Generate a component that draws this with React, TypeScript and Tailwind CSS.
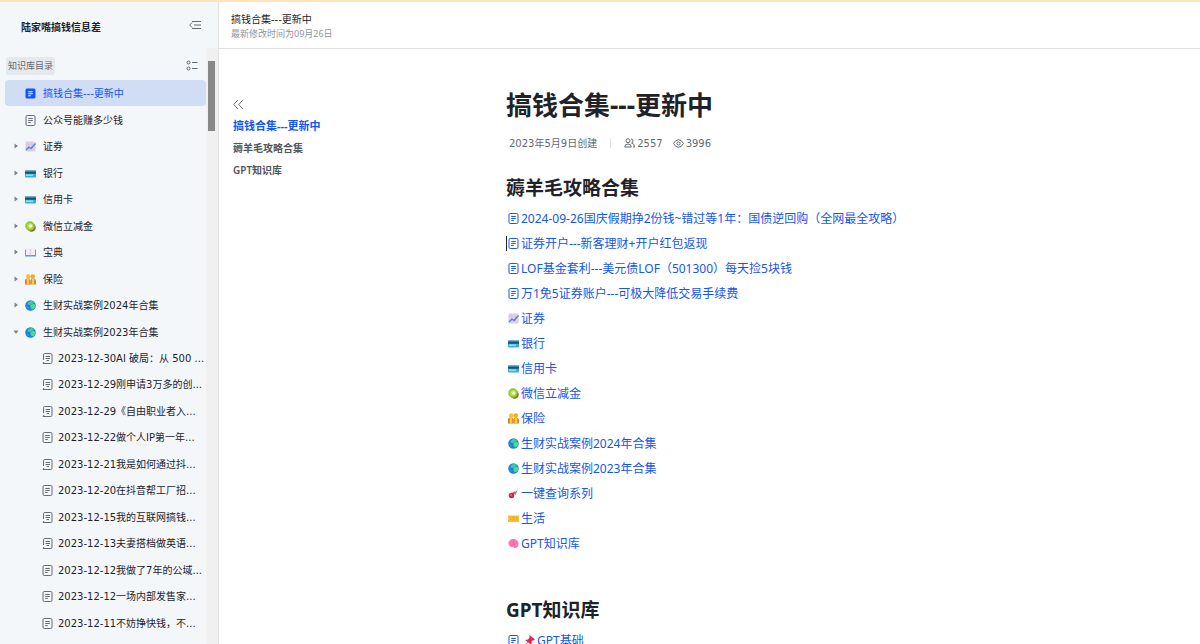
import type { ReactNode } from 'react'

type IconName =
  | 'doc'
  | 'docSolid'
  | 'thread'
  | 'chart'
  | 'card'
  | 'kiwi'
  | 'book'
  | 'people'
  | 'globe'
  | 'comet'
  | 'ticket'
  | 'brain'
  | 'pin'

const drawings: Record<IconName, ReactNode> = {
  doc: (
    <g fill="none" stroke="currentColor" strokeWidth="2">
      <rect x="2" y="1" width="18" height="20" rx="2.5" />
      <path d="M6.5 7h9M6.5 11h9M6.5 15h5" />
    </g>
  ),
  docSolid: (
    <>
      <rect x="1" y="1" width="20" height="20" rx="3" fill="currentColor" />
      <path d="M6.5 7.5h9M6.5 11.5h9M6.5 15.5h5" stroke="#fff" strokeWidth="2" />
    </>
  ),
  thread: (
    <g fill="none" stroke="currentColor" strokeWidth="2">
      <path d="M3 14V3.500A2.500 2.500 0 0 1 5.500 1H17.500A2.500 2.500 0 0 1 20 3.500v15a2.500 2.500 0 0 1-2.500 2.500H2l2-3" />
      <path d="M7 7h9M7 11h9M9 15h5" />
    </g>
  ),
  chart: (
    <>
      <rect x="1" y="1" width="20" height="20" rx="1" fill="#dfd0e8" />
      <path d="M1 7h20M1 14h20M7 1v20M14 1v20" stroke="#cdbcdc" />
      <path d="M2 18l6-6 4 3 9-10" fill="none" stroke="#4b85c8" strokeWidth="2.600" />
    </>
  ),
  card: (
    <>
      <rect x="0" y="5" width="22" height="14" rx="1.500" fill="#35b0dc" />
      <rect x="0" y="5" width="22" height="2.500" fill="#3d93bd" />
      <rect x="0" y="7.500" width="22" height="4" fill="#1d4f70" />
      <rect x="2" y="13" width="14" height="2.500" fill="#b9e6f3" />
    </>
  ),
  kiwi: (
    <>
      <circle cx="13" cy="13" r="8.500" fill="#936538" />
      <circle cx="10" cy="10" r="9.500" fill="#8ac926" />
      <circle cx="10" cy="10" r="6.500" fill="#a9db45" />
      <ellipse cx="11" cy="10" rx="4" ry="3.500" fill="#f3f8d6" />
    </>
  ),
  book: (
    <>
      <path d="M0 5h22v14H0z" fill="#5b9be8" />
      <path d="M2 3h8l1 1 1-1h8v13h-8l-1 1-1-1H2z" fill="#f1ecf6" />
      <path d="M11 4v13" stroke="#b8a6c9" />
    </>
  ),
  people: (
    <>
      <circle cx="6.500" cy="5" r="4.500" fill="#ffb92e" />
      <circle cx="15.500" cy="5" r="4.500" fill="#f5a623" />
      <path d="M0 21v-8q0-4 5-4t6 4v8z" fill="#e8742c" />
      <path d="M11 21v-8q0-4 5-4t6 4v8z" fill="#c48a2a" />
      <path d="M6 10v10M16 10v10" stroke="#ffc94a" strokeWidth="5" />
    </>
  ),
  globe: (
    <>
      <circle cx="11" cy="11" r="10.500" fill="#1c80dc" />
      <path d="M6 5q3-4 8-3l4 3-3 2-2 2-4 1-4-1z" fill="#43c9a0" />
      <path d="M11 10l6-3 4 4q0 4-4 7l-3 1-3-4z" fill="#4fdb8c" />
      <path d="M3 12l4 2 1 4-3-1z" fill="#2f9fd0" />
    </>
  ),
  comet: (
    <>
      <path d="M11 11l9-8-5 11z" fill="#8f8ca0" />
      <path d="M6 11l9-5-4 9z" fill="#e74856" />
      <circle cx="7" cy="15" r="5.500" fill="#d8223e" />
      <circle cx="6" cy="14" r="2" fill="#f06a78" />
    </>
  ),
  ticket: (
    <>
      <path d="M0 5h22v5q-2 1.500 0 3v5H0v-5q2-1.500 0-3z" fill="#f9bd32" />
      <path d="M5 9v5M8 9h6M8 14h6M18 8v7" stroke="#d8921e" strokeWidth="1.200" />
    </>
  ),
  brain: (
    <>
      <path d="M1 12C0 6 5 2 11 2c6 0 11 5 10 11 0 4-2 6-5 6l-3 2-2-3c-5 1-9-1-10-6z" fill="#f47bb5" />
      <path d="M5 10q3-3 6 0t7 0M6 14q4-2 8 0M11 4q-1 3 2 4" fill="none" stroke="#de62a2" strokeWidth="1.200" />
    </>
  ),
  pin: (
    <>
      <path d="M8 14l-6 7" stroke="#8d8d99" strokeWidth="2" />
      <path d="M11 0l11 9-3 2-2 0-2 3 0 6L2 10l6-1 3-4z" fill="#e5264c" />
    </>
  ),
}

function Icon({ name, className = '' }: { name: IconName; className?: string }) {
  return (
    <svg
      viewBox="0 0 22 22"
      className={`h-[11px] w-[11px] shrink-0 ${className}`}
      aria-hidden="true"
    >
      {drawings[name]}
    </svg>
  )
}

const articles: { icon: IconName; title: string }[] = [
  { icon: 'thread', title: '2023-12-30AI 破局：从 500 ...' },
  { icon: 'thread', title: '2023-12-29刚申请3万多的创...' },
  { icon: 'thread', title: '2023-12-29《自由职业者入...' },
  { icon: 'doc', title: '2023-12-22做个人IP第一年...' },
  { icon: 'thread', title: '2023-12-21我是如何通过抖...' },
  { icon: 'doc', title: '2023-12-20在抖音帮工厂招...' },
  { icon: 'thread', title: '2023-12-15我的互联网搞钱...' },
  { icon: 'thread', title: '2023-12-13夫妻搭档做英语...' },
  { icon: 'doc', title: '2023-12-12我做了7年的公域...' },
  { icon: 'doc', title: '2023-12-12一场内部发售家...' },
  { icon: 'doc', title: '2023-12-11不妨挣快钱，不...' },
  { icon: 'doc', title: '' },
]

const folders: { icon: IconName; title: string; children?: typeof articles }[] = [
  { icon: 'chart', title: '证券' },
  { icon: 'card', title: '银行' },
  { icon: 'card', title: '信用卡' },
  { icon: 'kiwi', title: '微信立减金' },
  { icon: 'book', title: '宝典' },
  { icon: 'people', title: '保险' },
  { icon: 'globe', title: '生财实战案例2024年合集' },
  { icon: 'globe', title: '生财实战案例2023年合集', children: articles },
]

const links: { icon: IconName; title: string; cursor?: boolean }[] = [
  { icon: 'doc', title: '2024-09-26国庆假期挣2份钱~错过等1年：国债逆回购（全网最全攻略）' },
  { icon: 'doc', title: '证券开户---新客理财+开户红包返现', cursor: true },
  { icon: 'doc', title: 'LOF基金套利---美元债LOF（501300）每天捡5块钱' },
  { icon: 'doc', title: '万1免5证券账户---可极大降低交易手续费' },
  { icon: 'chart', title: '证券' },
  { icon: 'card', title: '银行' },
  { icon: 'card', title: '信用卡' },
  { icon: 'kiwi', title: '微信立减金' },
  { icon: 'people', title: '保险' },
  { icon: 'globe', title: '生财实战案例2024年合集' },
  { icon: 'globe', title: '生财实战案例2023年合集' },
  { icon: 'comet', title: '一键查询系列' },
  { icon: 'ticket', title: '生活' },
  { icon: 'brain', title: 'GPT知识库' },
]

function Sidebar() {
  return (
    <aside className="flex w-[219px] shrink-0 flex-col border-r border-[#dee0e3] bg-[#f4f7fa] font-['DejaVu_Sans','Noto_Sans_CJK_SC',sans-serif]">
      <div className="flex h-[46px] shrink-0 items-center justify-between pt-1 pr-[17px] pl-[21px]">
        <span className="text-[10px] font-bold">陆家嘴搞钱信息差</span>
        <button aria-label="收起侧边栏" className="mb-1 text-[#646a73]">
          <svg viewBox="0 0 12 10" className="h-[10px] w-3" fill="none" stroke="currentColor">
            <path d="M3 1.500h9M5 5h7M3 8.500h9M3 2.500L.7 5 3 7.500" />
          </svg>
        </button>
      </div>

      <div className="flex min-h-0 flex-1">
        <nav className="min-w-0 flex-1 overflow-hidden">
          <div className="mt-2 mb-[5px] flex h-[19px] items-center justify-between pr-2 pl-1.5">
            <span className="rounded-xs bg-[#e6e9ec] px-[2px] text-[9px] leading-[18px] text-[#646a73]">
              知识库目录
            </span>
            <button aria-label="目录选项" className="text-[#646a73]">
              <svg viewBox="0 0 12 11" className="h-[11px] w-3" fill="none" stroke="currentColor">
                <circle cx="2.500" cy="2.500" r="1.500" />
                <circle cx="2.500" cy="8.500" r="1.500" />
                <path d="M6 2.500h5.500M6 8.500h5.500" />
              </svg>
            </button>
          </div>

          <ul>
            <li className="odd:mb-px">
              <a
                href="#top"
                className="ml-[5px] flex h-[26px] items-center gap-[7px] rounded bg-[#d1dcf5] pl-[20px] text-[#1456f0]"
              >
                <Icon name="docSolid" />
                搞钱合集---更新中
              </a>
            </li>
            <li className="odd:mb-px">
              <a href="#second" className="flex h-[26px] items-center gap-[7px] pl-[25px]">
                <Icon name="doc" className="text-[#646a73]" />
                公众号能赚多少钱
              </a>
            </li>
            {folders.map((folder) => (
              <li key={folder.title} className="odd:mb-px">
                <button
                  aria-expanded={!!folder.children}
                  className="flex h-[26px] w-full items-center pl-[13px]"
                >
                  <svg
                    viewBox="0 0 6 6"
                    className={`mr-1.5 h-1.5 w-1.5 fill-[#7d838c] ${folder.children ? 'rotate-90' : ''}`}
                  >
                    <path d="M1.500 .5L5 3 1.500 5.500z" />
                  </svg>
                  <Icon name={folder.icon} />
                  <span className="ml-[7px]">{folder.title}</span>
                </button>
                {folder.children && (
                  <ul>
                    {folder.children.map((article) => (
                      <li key={article.title} className="even:mb-px">
                        <a
                          href="#article"
                          className="flex h-[26px] items-center gap-[5px] pl-[42px] whitespace-nowrap"
                        >
                          <Icon name={article.icon} className="text-[#646a73]" />
                          {article.title}
                        </a>
                      </li>
                    ))}
                  </ul>
                )}
              </li>
            ))}
          </ul>
        </nav>

        {/* Scrollbar */}
        <div className="w-3 shrink-0 bg-[#f0f0f0] pt-[13px] pl-[2px]">
          <div className="h-[70px] w-[7px] bg-[#888888]" />
        </div>
      </div>
    </aside>
  )
}

function Outline() {
  return (
    <nav className="w-[287px] shrink-0 pt-[50px] pl-[14px]">
      <button aria-label="收起大纲" className="block h-[11px] text-[#646a73]">
        <svg viewBox="0 0 11 11" className="h-[11px] w-[11px]" fill="none" stroke="currentColor">
          <path d="M5 .8L.8 5.500 5 10.200M10 .8L5.800 5.500 10 10.200" />
        </svg>
      </button>
      <ul className="mt-[5px] leading-[22px] font-semibold text-[#51565d]">
        <li>
          <a href="#top" className="block text-[11px] leading-[22px] font-bold text-[#1456f0]">
            搞钱合集---更新中
          </a>
        </li>
        <li>
          <a href="#guides" className="block">
            薅羊毛攻略合集
          </a>
        </li>
        <li>
          <a href="#gpt" className="block">
            GPT知识库
          </a>
        </li>
      </ul>
    </nav>
  )
}

function Article() {
  return (
    <article className="min-w-0 flex-1 pt-[37px]">
      <h1 id="top" className="text-[26px] leading-[38px] font-bold">
        搞钱合集---更新中
      </h1>
      <div className="mt-[9px] flex h-5 items-center pl-[3px] font-['DejaVu_Sans','Noto_Sans_CJK_SC',sans-serif] text-[#646a73]">
        <span>2023年5月9日创建</span>
        <span className="mx-[13px] h-2.5 w-px bg-[#dee0e3]" />
        <svg viewBox="0 0 22 20" className="mr-[2px] h-[10px] w-[11px]" fill="none" stroke="currentColor" strokeWidth="2">
          <circle cx="8" cy="5.500" r="4" />
          <path d="M1.500 18q0-6 6.500-6t6.500 6zM14 2q4 0 4 4t-3 4q6 1 6 8h-3" />
        </svg>
        2557
        <svg viewBox="0 0 22 18" className="mr-[2px] ml-[10px] h-[9px] w-[11px]" fill="none" stroke="currentColor" strokeWidth="2">
          <path d="M1 9q4-7.500 10-7.500T21 9q-4 7.500-10 7.500T1 9z" />
          <circle cx="11" cy="9" r="3.200" />
        </svg>
        3996
      </div>

      <h2 id="guides" className="mt-[22px] text-[19px] leading-[26px] font-bold">
        薅羊毛攻略合集
      </h2>
      <ul className="mt-[5px] text-[12px]">
        {links.map((link) => (
          <li key={link.title} className="flex h-[25px] items-center">
            <span className={`mr-px h-[15px] w-px ${link.cursor ? 'bg-[#1f2329]' : ''}`} />
            <a href="#link" className="flex items-center gap-[2px] text-[#1456f0]">
              <Icon name={link.icon} />
              {link.title}
            </a>
          </li>
        ))}
      </ul>

      <h2 id="gpt" className="mt-[41px] text-[19px] leading-[26px] font-bold">
        GPT知识库
      </h2>
      <ul className="mt-[5px] text-[12px]">
        <li className="flex h-[25px] items-center pl-[2px]">
          <a href="#basics" className="flex items-center text-[#1456f0]">
            <Icon name="doc" />
            <Icon name="pin" className="mr-[2px] ml-[5px]" />
            GPT基础
          </a>
        </li>
      </ul>
    </article>
  )
}

export default function App() {
  return (
    <div className="flex h-screen overflow-hidden border-t-2 border-[#fde3b8] bg-white font-['Noto_Sans','Noto_Sans_CJK_SC',sans-serif] text-[10px] text-[#1f2329]">
      <Sidebar />
      <div className="flex min-w-0 flex-1 flex-col">
        <header className="flex h-[47px] shrink-0 flex-col justify-center border-b border-[#dee0e3] pt-[3px] pl-3">
          <span className="font-['DejaVu_Sans','Noto_Sans_CJK_SC',sans-serif] leading-[14px]">
            搞钱合集---更新中
          </span>
          <span className="text-[9px] leading-[14px] text-[#8f959e]">
            最新修改时间为09月26日
          </span>
        </header>
        <main className="flex min-h-0 flex-1 overflow-hidden">
          <Outline />
          <Article />
        </main>
      </div>
    </div>
  )
}
